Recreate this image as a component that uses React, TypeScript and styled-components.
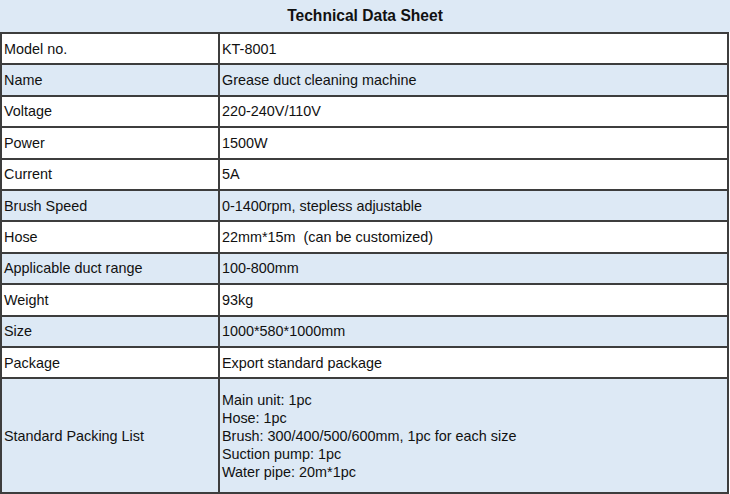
import * as React from "react";
import styled, { createGlobalStyle } from "styled-components";

const GlobalStyle = createGlobalStyle`
  html, body {
    margin: 0;
    padding: 0;
    background: #ffffff;
  }
  body {
    font-family: "Liberation Sans", Arial, sans-serif;
    color: #111;
  }
`;

const specs = [
  { label: "Model no.", value: "KT-8001", shaded: false },
  { label: "Name", value: "Grease duct cleaning machine", shaded: true },
  { label: "Voltage", value: "220-240V/110V", shaded: false },
  { label: "Power", value: "1500W", shaded: false },
  { label: "Current", value: "5A", shaded: false },
  { label: "Brush Speed", value: "0-1400rpm, stepless adjustable", shaded: true },
  { label: "Hose", value: "22mm*15m\u00a0\u00a0(can be customized)", shaded: false },
  { label: "Applicable duct range", value: "100-800mm", shaded: true },
  { label: "Weight", value: "93kg", shaded: false },
  { label: "Size", value: "1000*580*1000mm", shaded: true },
  { label: "Package", value: "Export standard package", shaded: false }
];

const packingList = [
  "Main unit: 1pc",
  "Hose: 1pc",
  "Brush: 300/400/500/600mm, 1pc for each size",
  "Suction pump: 1pc",
  "Water pipe: 20m*1pc"
];

const Sheet = styled.div`
  width: 730px;
  height: 494px;
  overflow: hidden;
`;

const Title = styled.div`
  height: 32px;
  background: #dde9f5;
  display: flex;
  align-items: center;
  justify-content: center;
  font-weight: bold;
  font-size: 15.6px;
`;

const Table = styled.table`
  width: 729px;
  border-collapse: collapse;
  table-layout: fixed;
  font-size: 14.4px;
`;

const Row = styled.tr<{ $shaded?: boolean; $tall?: boolean }>`
  height: ${p => (p.$tall ? "115px" : "31.4px")};
  background: ${p => (p.$shaded ? "#dde9f5" : "#ffffff")};
`;

const Cell = styled.td`
  border: 2px solid #3d3d3d;
  padding: 0 0 0 2px;
  vertical-align: middle;
  white-space: nowrap;
  line-height: 18px;
  overflow: hidden;
`;

const ListLine = styled.div`
  line-height: 18px;
`;

export default function App() {
  return (
    <Sheet>
      <GlobalStyle />
      <Title>Technical Data Sheet</Title>
      <Table>
        <colgroup>
          <col style={{ width: 218 }} />
          <col />
        </colgroup>
        <tbody>
          {specs.map(s => (
            <Row key={s.label} $shaded={s.shaded}>
              <Cell>{s.label}</Cell>
              <Cell>{s.value}</Cell>
            </Row>
          ))}
          <Row $shaded $tall>
            <Cell>Standard Packing List</Cell>
            <Cell>
              {packingList.map(line => (
                <ListLine key={line}>{line}</ListLine>
              ))}
            </Cell>
          </Row>
        </tbody>
      </Table>
    </Sheet>
  );
}
